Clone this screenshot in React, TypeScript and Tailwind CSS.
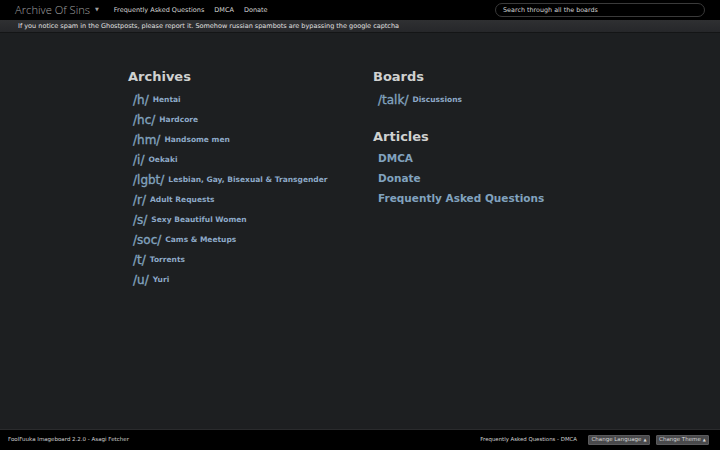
import React from "react";

const archives: [string, string][] = [
  ["/h/", "Hentai"],
  ["/hc/", "Hardcore"],
  ["/hm/", "Handsome men"],
  ["/i/", "Oekaki"],
  ["/lgbt/", "Lesbian, Gay, Bisexual & Transgender"],
  ["/r/", "Adult Requests"],
  ["/s/", "Sexy Beautiful Women"],
  ["/soc/", "Cams & Meetups"],
  ["/t/", "Torrents"],
  ["/u/", "Yuri"],
];

function BoardRow({ code, name }: { code: string; name: string }) {
  return (
    <div className="h-[20px] flex items-center pl-[5px] text-[#81a2be] whitespace-nowrap">
      <span className="text-[12px] leading-none [-webkit-text-stroke:0.35px_#81a2be]">{code}</span>
      <span className="text-[7.5px] font-bold leading-none ml-[4px] text-[#8da9c8]">{name}</span>
    </div>
  );
}

export default function App() {
  return (
    <div
      className="w-[720px] h-[450px] flex flex-col bg-[#1d1f21] overflow-hidden"
      style={{ fontFamily: '"DejaVu Sans", sans-serif' }}
    >
      {/* Top navbar */}
      <div className="h-[20px] bg-black flex items-center">
        <div className="ml-[15px] flex items-center text-[#a0a0a0]">
          <span className="text-[11.2px] font-light leading-none" style={{ fontFamily: '"Open Sans", sans-serif' }}>
            Archive Of Sins
          </span>
          <span className="ml-[5px] text-[5px] leading-none">▼</span>
        </div>
        <div className="ml-[15px] flex items-center gap-[10px] text-[6.5px] text-[#d6d6d6] leading-none">
          <span>Frequently Asked Questions</span>
          <span>DMCA</span>
          <span>Donate</span>
        </div>
        <div className="ml-auto mr-[15px] w-[210px] h-[14px] rounded-full border border-[#3a3a3a] bg-black flex items-center pl-[7px]">
          <span className="text-[6.4px] text-[#d4d4d4] leading-none">Search through all the boards</span>
        </div>
      </div>

      {/* Notice */}
      <div className="h-[13px] bg-gradient-to-b from-[#2f3032] to-[#26272a] border-b border-[#141516] flex items-center pl-[18px]">
        <span className="text-[6.5px] text-[#e0e0e0] leading-none whitespace-nowrap">
          If you notice spam in the Ghostposts, please report it. Somehow russian spambots are bypassing the google captcha
        </span>
      </div>

      {/* Main */}
      <div className="flex-1 flex pt-[36px] pl-[128px]">
        <div className="w-[245px]">
          <h2 className="text-[13px] font-bold leading-[16px] text-[#cfd1d0] mb-[5px]">Archives</h2>
          {archives.map(([c, n]) => (
            <BoardRow key={c} code={c} name={n} />
          ))}
        </div>
        <div>
          <h2 className="text-[13px] font-bold leading-[16px] text-[#cfd1d0] mb-[5px]">Boards</h2>
          <BoardRow code="/talk/" name="Discussions" />
          <h2 className="text-[13px] font-bold leading-[16px] text-[#cfd1d0] mt-[19px] mb-[3px]">Articles</h2>
          {["DMCA", "Donate", "Frequently Asked Questions"].map((a) => (
            <div key={a} className="h-[20px] flex items-center pl-[5px] text-[10.5px] font-bold text-[#81a2be] leading-none">
              {a}
            </div>
          ))}
        </div>
      </div>

      {/* Footer */}
      <div className="h-[21px] bg-black border-t border-[#2a2b2d] flex items-center">
        <span className="ml-[8px] text-[5.5px] text-[#d0d0d0] leading-none">FoolFuuka Imageboard 2.2.0 - Asagi Fetcher</span>
        <span className="ml-auto text-[5.4px] text-[#d0d0d0] leading-none">Frequently Asked Questions - DMCA</span>
        <div className="ml-[11px] h-[10px] w-[62px] rounded-[1px] bg-[#4a4a4c] border border-[#5a5a5c] flex items-center justify-center text-[5.5px] text-[#d8d8d8] leading-none">
          Change Language <span className="ml-[2px] text-[4px]">▲</span>
        </div>
        <div className="ml-[6px] mr-[11px] h-[10px] w-[53px] rounded-[1px] bg-[#4a4a4c] border border-[#5a5a5c] flex items-center justify-center text-[5.5px] text-[#d8d8d8] leading-none">
          Change Theme <span className="ml-[2px] text-[4px]">▲</span>
        </div>
      </div>
    </div>
  );
}
